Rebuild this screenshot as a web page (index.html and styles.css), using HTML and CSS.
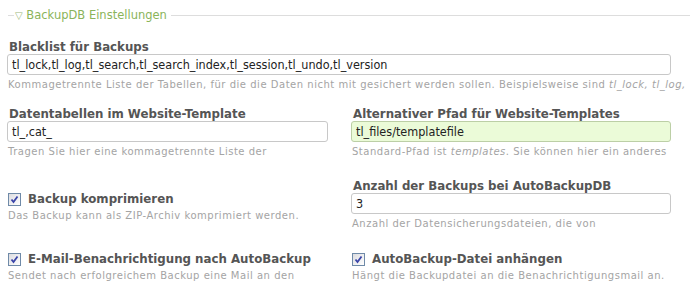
FILE: index.html
```html
<!DOCTYPE html>
<html lang="de">
<head>
  <meta charset="UTF-8">
  <title>BackupDB Einstellungen</title>
  <link rel="stylesheet" href="styles.css">
</head>
<body>
  <fieldset class="tl_box">
    <legend class="tl_legend"><span class="tl_legend__arrow">▽</span> BackupDB Einstellungen</legend>

    <div class="widget widget--long">
      <h3 class="widget__label">Blacklist für Backups</h3>
      <div class="tl_text">tl_lock,tl_log,tl_search,tl_search_index,tl_session,tl_undo,tl_version</div>
      <p class="tl_help">Kommagetrennte Liste der Tabellen, für die die Daten nicht mit gesichert werden sollen. Beispielsweise sind <em>tl_lock, tl_log,</em></p>
    </div>

    <div class="row row--first">
      <div class="widget">
        <h3 class="widget__label">Datentabellen im Website-Template</h3>
        <div class="tl_text">tl_,cat_</div>
        <p class="tl_help">Tragen Sie hier eine kommagetrennte Liste der</p>
      </div>
      <div class="widget">
        <h3 class="widget__label">Alternativer Pfad für Website-Templates</h3>
        <div class="tl_text tl_text--changed">tl_files/templatefile</div>
        <p class="tl_help">Standard-Pfad ist <em>templates</em>. Sie können hier ein anderes</p>
      </div>
    </div>

    <div class="row">
      <div class="widget widget--cbx">
        <div class="tl_checkbox">
          <span class="cbx"><svg viewBox="0 0 11 11" width="11" height="11"><path d="M2.5 5.5 L4.5 8 L8.5 2.5" fill="none" stroke="#3b45a8" stroke-width="1.8"/></svg></span>
          <label class="widget__label">Backup komprimieren</label>
        </div>
        <p class="tl_help">Das Backup kann als ZIP-Archiv komprimiert werden.</p>
      </div>
      <div class="widget widget--spaced">
        <h3 class="widget__label">Anzahl der Backups bei AutoBackupDB</h3>
        <div class="tl_text">3</div>
        <p class="tl_help">Anzahl der Datensicherungsdateien, die von</p>
      </div>
    </div>

    <div class="row">
      <div class="widget widget--cbx2">
        <div class="tl_checkbox">
          <span class="cbx"><svg viewBox="0 0 11 11" width="11" height="11"><path d="M2.5 5.5 L4.5 8 L8.5 2.5" fill="none" stroke="#3b45a8" stroke-width="1.8"/></svg></span>
          <label class="widget__label">E-Mail-Benachrichtigung nach AutoBackup</label>
        </div>
        <p class="tl_help">Sendet nach erfolgreichem Backup eine Mail an den</p>
      </div>
      <div class="widget widget--cbx2">
        <div class="tl_checkbox">
          <span class="cbx"><svg viewBox="0 0 11 11" width="11" height="11"><path d="M2.5 5.5 L4.5 8 L8.5 2.5" fill="none" stroke="#3b45a8" stroke-width="1.8"/></svg></span>
          <label class="widget__label">AutoBackup-Datei anhängen</label>
        </div>
        <p class="tl_help">Hängt die Backupdatei an die Benachrichtigungsmail an.</p>
      </div>
    </div>
  </fieldset>
</body>
</html>
```

FILE: styles.css
```css
* { box-sizing: border-box; }
body {
  margin: 0;
  background: #fff;
  font-family: 'DejaVu Sans', Verdana, sans-serif;
  color: #444;
  overflow: hidden;
}
.tl_box {
  margin: 8px 6px 0 8px;
  padding: 0;
  border: 0;
  border-top: 1px solid #ddd;
  min-width: 0;
}
.tl_legend {
  margin-left: 6px;
  padding: 0 4px 0 1px;
  font-size: 11.5px;
  color: #8ab45a;
  line-height: 14px;
}
.tl_legend__arrow {
  font-size: 10px;
  color: #9ab87a;
}
.widget--long { width: 664px; padding-top: 17px; margin-left: -1px; }
.row {
  display: grid;
  grid-template-columns: 321px 320px;
  column-gap: 23px;
  margin-left: -1px;
}
.row--first { margin-top: 2px; }
.widget__label {
  margin: 0;
  font-size: 11.8px;
  font-weight: bold;
  color: #555;
  line-height: 14px;
  padding-left: 2px;
}
.row .widget { padding-top: 14px; }
.tl_text {
  margin-top: 0;
  height: 21px;
  border: 1px solid #c8c8c8;
  border-radius: 3px;
  padding: 2px 4px 0;
  font-family: 'DejaVu Sans Condensed', sans-serif;
  font-size: 12.5px;
  line-height: 16px;
  color: #222;
  white-space: nowrap;
  overflow: hidden;
}
.tl_text--changed {
  background: #ebfbd8;
  border-color: #bccfa6;
}
.tl_help {
  margin: 3px 0 0 1px;
  font-size: 10px;
  color: #a4a4a4;
  line-height: 13px;
  letter-spacing: 0.52px;
  white-space: nowrap;
}
.tl_help em { font-style: italic; }
.row .widget--cbx { padding-top: 34px; }
.row .widget--spaced { padding-top: 21px; }
.row .widget--cbx2 { padding-top: 22px; }
.tl_checkbox {
  display: flex;
  align-items: center;
  gap: 7px;
  padding-left: 1px;
}
.tl_checkbox .widget__label { padding-left: 0; }
.cbx {
  width: 13px;
  height: 13px;
  border: 1px solid #6f8aa8;
  background: linear-gradient(135deg, #dcdce0, #fff);
  display: flex;
  align-items: center;
  justify-content: center;
}
.cbx svg { display: block; }
```
